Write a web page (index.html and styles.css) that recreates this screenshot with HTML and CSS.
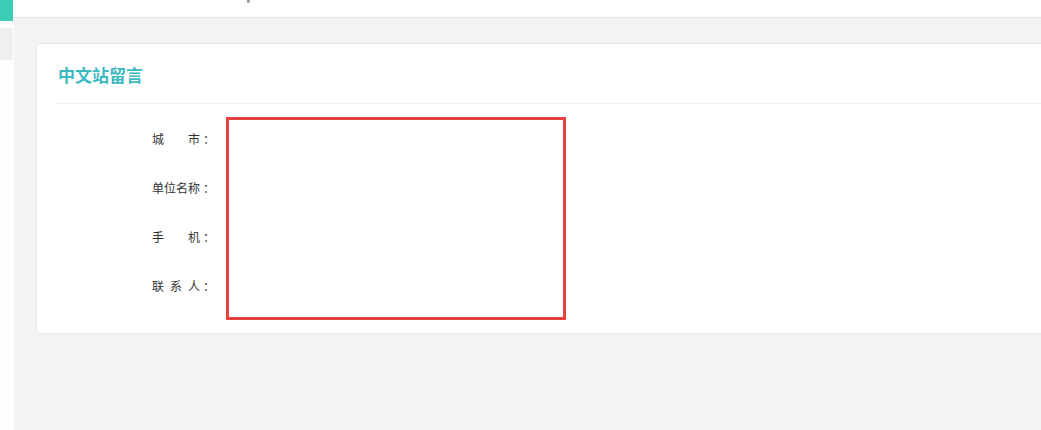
FILE: index.html
```html
<!DOCTYPE html>
<html lang="zh-CN">
<head>
<meta charset="utf-8">
<title>中文站留言</title>
<link rel="stylesheet" href="styles.css">
</head>
<body>
<div class="app">
  <aside class="sidebar">
    <div class="logo-block"></div>
    <div class="nav-item"></div>
  </aside>
  <div class="content">
    <header class="topbar"><span class="topbar-mark"></span></header>
    <main class="main">
      <section class="card">
        <div class="card-header">中文站留言</div>
        <div class="card-body">
          <form class="form">
            <label class="label row1">城&emsp;&emsp;市<span class="colon">：</span></label>
            <label class="label row2">单位名称<span class="colon">：</span></label>
            <label class="label row3">手&emsp;&emsp;机<span class="colon">：</span></label>
            <label class="label row4">联&ensp;系&ensp;人<span class="colon">：</span></label>
            <div class="field-box"></div>
          </form>
        </div>
      </section>
    </main>
  </div>
</div>
</body>
</html>
```
FILE: styles.css
```css
html, body {
  margin: 0;
  padding: 0;
  height: 100%;
  overflow: hidden;
}
body {
  font-family: "Noto Sans CJK SC", "Noto Sans", "Liberation Sans", sans-serif;
  font-size: 12px;
  color: #333;
  background: #f3f3f3;
}
.app {
  display: grid;
  grid-template-columns: 14px 1fr;
  height: 430px;
}
.sidebar {
  background: #fdfdfd;
  display: flex;
  flex-direction: column;
}
.logo-block {
  height: 21px;
  width: 13px;
  background: #3ccdb6;
}
.nav-item {
  margin-top: 7px;
  height: 32px;
  width: 13px;
  background: #efefef;
}
.content {
  display: flex;
  flex-direction: column;
  min-width: 0;
}
.topbar {
  height: 17px;
  background: #fff;
  border-bottom: 1px solid #e4e4e4;
  display: flex;
  align-items: flex-start;
}
.topbar-mark {
  margin-left: 233px;
  width: 3px;
  height: 3px;
  background: #9a9a9a;
  border-radius: 0 0 2px 0;
}
.main {
  flex: 1;
  padding: 25px 0 0 22px;
}
.card {
  background: #fff;
  border: 1px solid #e6e6e6;
  border-radius: 3px;
  margin-right: -20px;
}
.card-header {
  margin: 0 0 0 19px;
  padding-left: 2px;
  padding-top: 1px;
  height: 58px;
  line-height: 59px;
  border-bottom: 1px solid #efefef;
  font-size: 17px;
  font-weight: 700;
  color: #3bb8c0;
}
.card-body {
  padding: 10px 0 23px 19px;
}
.form {
  display: grid;
  grid-template-columns: 159px 340px;
  grid-template-rows: repeat(4, 49px);
  column-gap: 11px;
}
.label {
  text-align: right;
  align-self: center;
  line-height: 16px;
  white-space: nowrap;
}
.colon {
  margin-left: 3px;
}
.row1 { grid-column: 1; grid-row: 1; }
.row2 { grid-column: 1; grid-row: 2; }
.row3 { grid-column: 1; grid-row: 3; }
.row4 { grid-column: 1; grid-row: 4; }
.field-box {
  grid-column: 2;
  grid-row: 1 / span 4;
  align-self: start;
  margin-top: 3px;
  height: 197px;
  border: 3px solid #e6403f;
}
```
